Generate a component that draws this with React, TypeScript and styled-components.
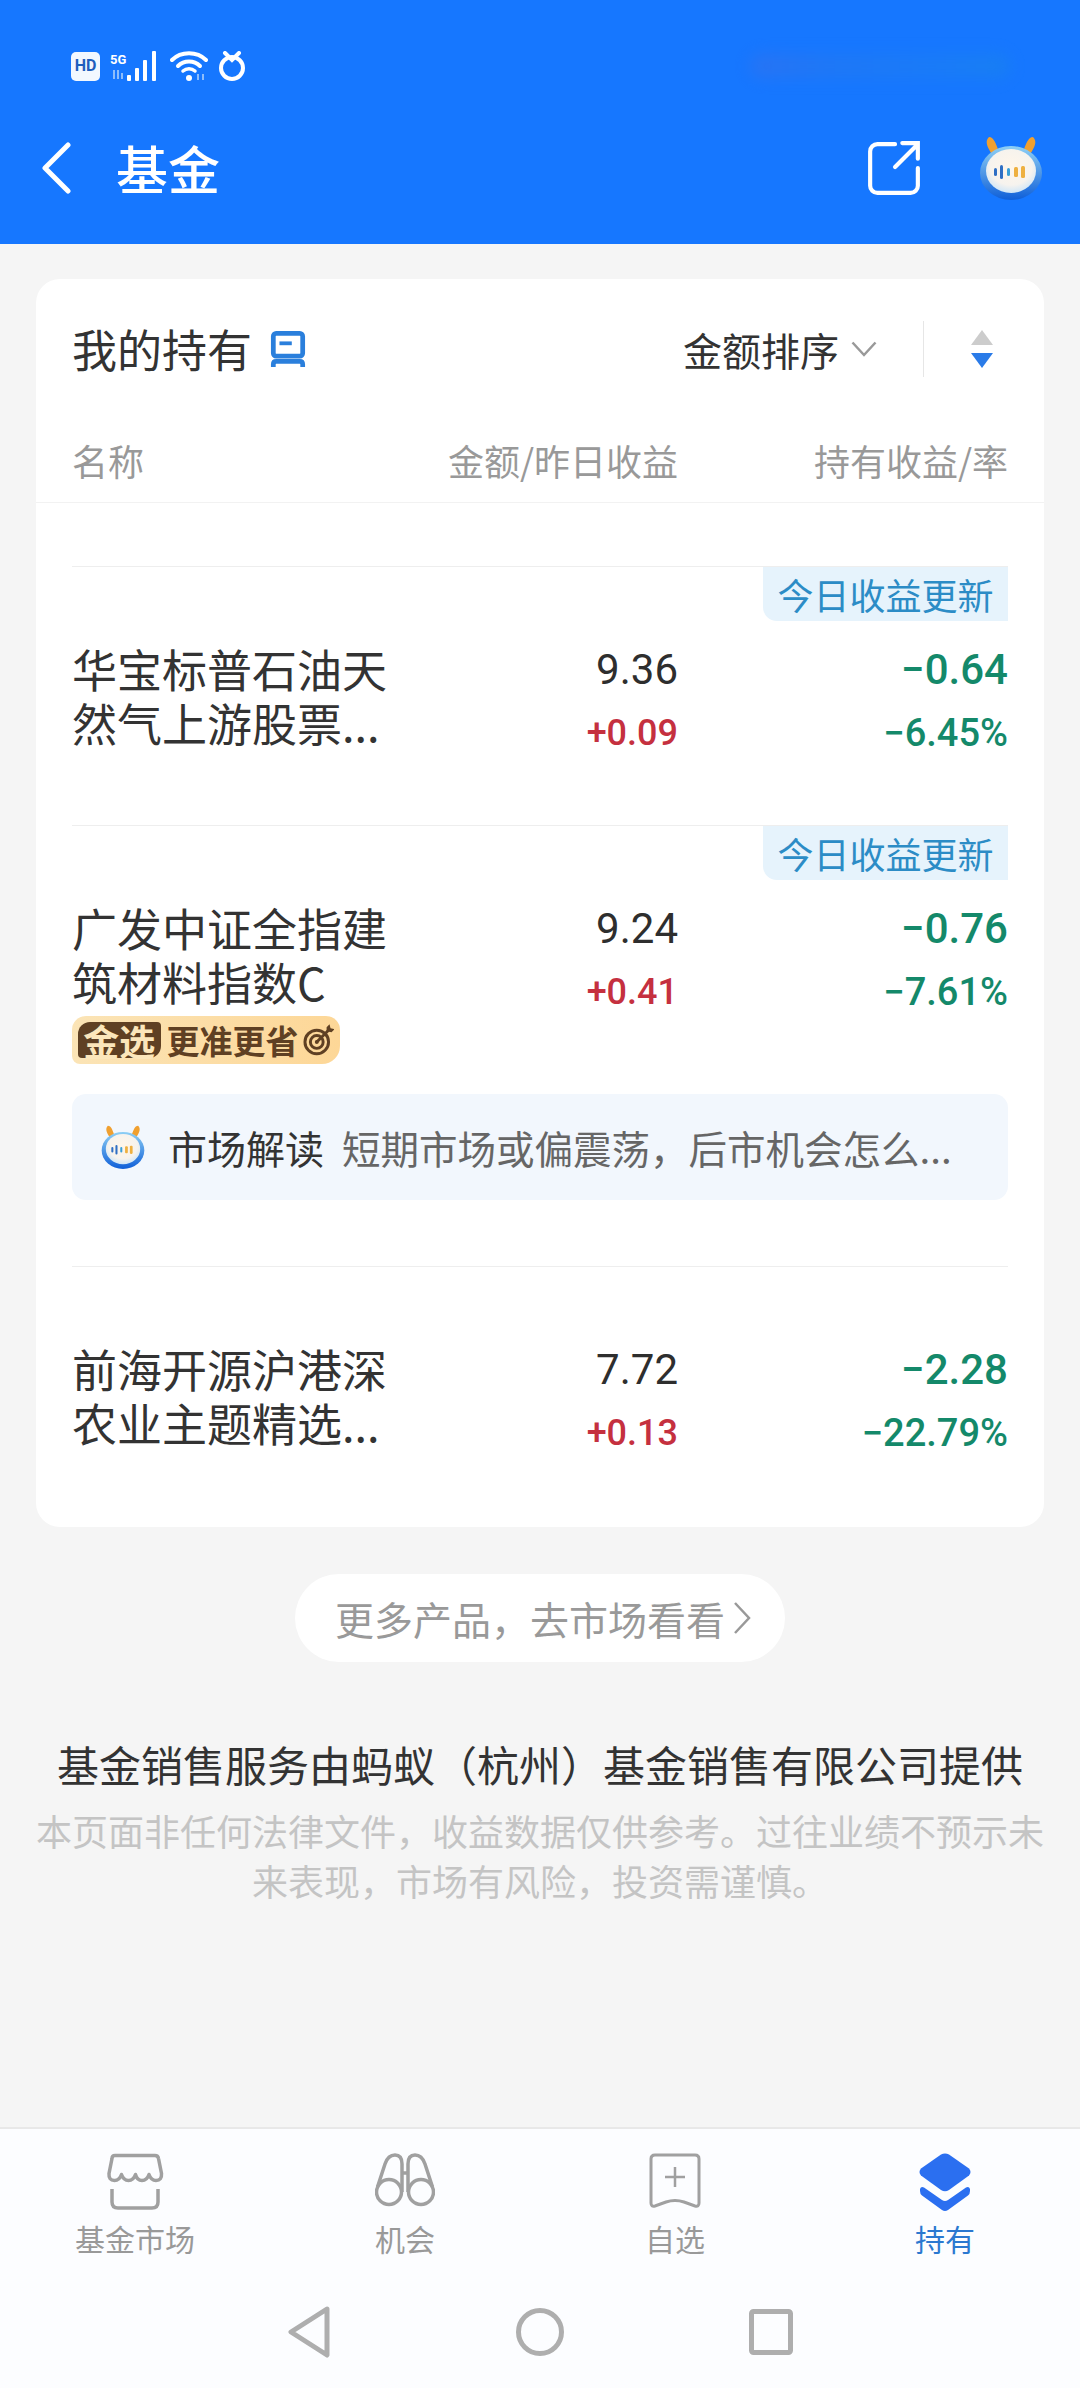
import React from 'react';
import styled, { createGlobalStyle } from 'styled-components';

const GlobalStyle = createGlobalStyle`
  html, body {
    margin: 0;
    padding: 0;
    background: #f5f5f5;
  }
  * {
    box-sizing: border-box;
  }
`;

const Page = styled.div`
  width: 1080px;
  height: 2388px;
  display: flex;
  flex-direction: column;
  overflow: hidden;
  background: #f5f5f5;
  color: #333;
  font-family: "Noto Sans CJK SC", "Noto Sans", sans-serif;
`;

const Header = styled.header`
  height: 244px;
  flex-shrink: 0;
  background: #1677ff;
`;

const StatusBar = styled.div`
  height: 132px;
  padding: 0 70px 0 71px;
  display: flex;
  align-items: center;
  gap: 10px;
`;

const HdBadge = styled.span`
  width: 29px;
  height: 29px;
  display: flex;
  align-items: center;
  justify-content: center;
  border-radius: 5px;
  background: #f2f8ff;
  color: #1f5fbd;
  font: 700 16px/20px "Roboto", sans-serif;
`;

const CarrierSmear = styled.div`
  width: 260px;
  height: 24px;
  margin-left: auto;
  border-radius: 12px;
  background: linear-gradient(90deg, #3f6fe6, #2a78ea 30%, #1f80ee 70%, #1a88e4);
  filter: blur(8px);
  opacity: 0.45;
`;

const TitleBar = styled.div`
  height: 72px;
  padding: 0 37px 0 41px;
  display: flex;
  align-items: center;
`;

const PageTitle = styled.h1`
  margin: 0 auto 0 45px;
  font-size: 52px;
  line-height: 70px;
  font-weight: 500;
  color: #fff;
`;

const ShareButton = styled.span`
  display: flex;
  margin-right: 58px;
`;

const Main = styled.main`
  flex: 1;
  min-height: 0;
`;

const Card = styled.section`
  margin: 35px 36px 0;
  padding-bottom: 2px;
  background: #fff;
  border-radius: 24px;
`;

const CardHead = styled.div`
  height: 142px;
  padding: 0 36px 2px;
  display: flex;
  align-items: center;
`;

const CardTitle = styled.h2`
  margin: 0 18px 0 0;
  font-size: 45px;
  line-height: 60px;
  font-weight: 400;
  color: #333;
`;

const SortLabel = styled.span`
  margin-left: auto;
  font-size: 39px;
  line-height: 50px;
  color: #333;
`;

const SortChevron = styled.span`
  display: flex;
  margin: 0 46px 0 12px;
`;

const SortDivider = styled.span`
  width: 1px;
  height: 56px;
  background: #e6e6e6;
  margin-right: 46px;
`;

const SortArrows = styled.span`
  display: flex;
  margin-right: 14px;
`;

const ColumnHead = styled.div`
  height: 82px;
  padding: 0 36px 4px;
  display: grid;
  grid-template-columns: 1fr 270px 330px;
  align-items: center;
  border-bottom: 1px solid #f2f2f2;
  font-size: 36px;
  color: #999;
`;

const HeadCell = styled.span<{ $right?: boolean }>`
  text-align: ${p => (p.$right ? 'right' : 'left')};
  white-space: nowrap;
`;

const RowList = styled.div`
  padding: 63px 36px 0;
`;

const Row = styled.article`
  border-top: 1px solid #eeeeee;
  padding-bottom: 66px;
`;

const TagSlot = styled.div`
  height: 54px;
  display: flex;
  justify-content: flex-end;
`;

const UpdateTag = styled.span`
  width: 245px;
  height: 54px;
  background: #e6f3fc;
  border-radius: 0 0 0 14px;
  color: #2c8cc6;
  font-size: 36px;
  line-height: 54px;
  text-align: center;
`;

const Cells = styled.div`
  margin-top: 20px;
  min-height: 118px;
  display: grid;
  grid-template-columns: 1fr 270px 330px;
  align-items: start;
`;

const FundName = styled.div`
  width: 320px;
  padding-top: 1px;
  font-size: 45px;
  line-height: 54px;
  color: #333;
`;

const Figures = styled.div`
  padding-top: 1px;
  text-align: right;
  font-family: "Roboto", sans-serif;
`;

const MainFigure = styled.div<{ $tone: 'dark' | 'green' }>`
  font-size: 42px;
  line-height: 56px;
  font-weight: ${p => (p.$tone === 'green' ? 500 : 400)};
  color: ${p => (p.$tone === 'green' ? '#14896a' : '#2e2e2e')};
`;

const SubFigure = styled.div<{ $tone: 'red' | 'green' }>`
  margin-top: 14px;
  font-size: ${p => (p.$tone === 'red' ? 36 : 38)}px;
  line-height: 42px;
  font-weight: 500;
  color: ${p => (p.$tone === 'red' ? '#c5303f' : '#14896a')};
`;

const PromoBadge = styled.div`
  margin-top: 7px;
  width: 268px;
  height: 48px;
  padding: 0 6px;
  display: flex;
  align-items: center;
  border-radius: 14px 14px 18px 8px;
  background: linear-gradient(90deg, #fbe4b6, #fdd797);
`;

const PromoMark = styled.span`
  width: 84px;
  height: 36px;
  border-radius: 12px 4px 12px 4px;
  background: #5f4023;
  color: #fbe6bb;
  font-size: 36px;
  line-height: 36px;
  font-weight: 700;
  text-align: center;
  white-space: nowrap;
`;

const PromoText = styled.span`
  margin: 0 4px 0 6px;
  font-size: 33px;
  line-height: 48px;
  font-weight: 700;
  color: #5f4023;
  white-space: nowrap;
`;

const Insight = styled.div`
  margin-top: 30px;
  height: 106px;
  padding: 0 29px;
  display: flex;
  align-items: center;
  border-radius: 14px;
  background: #f2f7fd;
`;

const InsightLabel = styled.span`
  margin-left: 23px;
  font-size: 39px;
  color: #333;
  white-space: nowrap;
`;

const InsightText = styled.span`
  margin-left: 18px;
  font-size: 38.5px;
  color: #666;
  white-space: nowrap;
`;

const MoreButton = styled.button`
  display: flex;
  align-items: center;
  width: 490px;
  height: 88px;
  margin: 47px auto 0;
  padding: 0 0 0 40px;
  border: 0;
  border-radius: 44px;
  background: #fff;
  color: #999;
  font-family: inherit;
  font-size: 39px;
  white-space: nowrap;
`;

const MoreChevron = styled.span`
  display: flex;
  margin-left: 8px;
`;

const Disclaimer = styled.div`
  margin-top: 72px;
  padding: 0 36px;
  text-align: center;
`;

const ProviderLine = styled.div`
  font-size: 42px;
  line-height: 60px;
  color: #333;
  white-space: nowrap;
`;

const LegalText = styled.p`
  margin: 11px 0 0;
  font-size: 36px;
  line-height: 50px;
  color: #c4c4c4;
`;

const BottomNav = styled.footer`
  height: 261px;
  flex-shrink: 0;
  background: #fcfdff;
  border-top: 2px solid #e8e8e8;
`;

const Tabs = styled.nav`
  padding-top: 24px;
  display: grid;
  grid-template-columns: repeat(4, 1fr);
`;

const Tab = styled.div<{ $active?: boolean }>`
  display: flex;
  flex-direction: column;
  align-items: center;
  font-size: 30px;
  line-height: 40px;
  color: ${p => (p.$active ? '#2b78d0' : '#999')};
`;

const TabIcon = styled.div`
  height: 65px;
  display: flex;
  align-items: flex-start;
`;

const SystemKeys = styled.div`
  margin-top: 17px;
  height: 114px;
  display: flex;
  justify-content: center;
  align-items: center;
  gap: 185px;
`;

const SignalIcon = () => (
  <svg width="50" height="30" viewBox="0 0 50 30">
    <text x="0" y="13" fontFamily="Roboto, sans-serif" fontWeight="700" fontSize="13" fill="#fff">5G</text>
    <path d="M4 19v9M8 19v9M12 22v6" stroke="#8dbdfb" strokeWidth="2" fill="none" />
    <rect x="17" y="24" width="4" height="6" rx="1" fill="#fff" />
    <rect x="25" y="17" width="4" height="13" rx="1" fill="#fff" />
    <rect x="33" y="9" width="4" height="21" rx="1" fill="#fff" />
    <rect x="42" y="0" width="4" height="30" rx="1" fill="#fff" />
  </svg>
);

const WifiIcon = () => (
  <svg width="38" height="30" viewBox="0 0 38 30">
    <path d="M2 9C11 0 27 0 36 9" stroke="#fff" strokeWidth="4" fill="none" strokeLinecap="round" />
    <path d="M8 15c6-6 16-6 22 0" stroke="#fff" strokeWidth="4" fill="none" strokeLinecap="round" />
    <path d="M13 20c3.500-3 8.500-3 12 0" stroke="#fff" strokeWidth="3.500" fill="none" strokeLinecap="round" />
    <circle cx="19" cy="27" r="3" fill="#fff" />
    <path d="M28 23v6M33 23v6" stroke="#8dbdfb" strokeWidth="2" />
  </svg>
);

const AlarmIcon = () => (
  <svg width="28" height="30" viewBox="0 0 28 30">
    <circle cx="14" cy="17" r="11" stroke="#fff" strokeWidth="4" fill="none" />
    <path d="M7 2l7 7 7-7" stroke="#fff" strokeWidth="4" fill="none" strokeLinecap="round" />
  </svg>
);

const BackIcon = () => (
  <svg width="30" height="52" viewBox="0 0 30 52">
    <path d="M27 3L4 26l23 23" stroke="#fff" strokeWidth="5" fill="none" strokeLinecap="round" strokeLinejoin="round" />
  </svg>
);

const ShareIcon = () => (
  <svg width="54" height="56" viewBox="0 0 52 54">
    <path d="M27 4H10a7 7 0 0 0-7 7v33a7 7 0 0 0 7 7h32a7 7 0 0 0 7-7V27" stroke="#fff" strokeWidth="4" fill="none" strokeLinecap="round" />
    <path d="M27 26L48 5M34 3h15v15" stroke="#fff" strokeWidth="4" fill="none" strokeLinecap="round" />
  </svg>
);

// the assistant mascot: orange horns, blue ring, sound bars on the face
const Mascot = ({ size, id }: { size: number; id: string }) => (
  <svg width={size} height={size} viewBox="0 0 64 64">
    <defs>
      <linearGradient id={`${id}-ring`} x1="0" y1="0" x2="0" y2="1">
        <stop offset="0" stopColor="#8fd0f5" />
        <stop offset="1" stopColor="#0f5fd8" />
      </linearGradient>
      <radialGradient id={`${id}-face`} cx="0.5" cy="0.4" r="0.6">
        <stop offset="0" stopColor="#fff6ea" />
        <stop offset="0.7" stopColor="#f6f3ee" />
        <stop offset="1" stopColor="#cfe6f8" />
      </radialGradient>
    </defs>
    <path d="M10 1c5 0 7 7 10 15l-6 4C9 12 5 6 10 1zM54 1c-5 0-7 7-10 15l6 4c5-8 9-14 4-19z" fill="#f0a030" />
    <ellipse cx="32" cy="37" rx="31" ry="27" fill={`url(#${id}-ring)`} />
    <ellipse cx="32" cy="35" rx="25" ry="22" fill={`url(#${id}-face)`} />
    <rect x="15" y="32" width="3" height="8" rx="1.500" fill="#2f6fc4" />
    <rect x="21" y="29" width="3" height="14" rx="1.500" fill="#2f6fc4" />
    <rect x="28" y="32" width="3" height="8" rx="1.500" fill="#3aa0d8" />
    <rect x="35" y="31" width="4" height="10" rx="1.500" fill="#eeb040" />
    <rect x="42" y="30" width="4" height="12" rx="1.500" fill="#eeb040" />
  </svg>
);

const HiddenIcon = () => (
  <svg width="36" height="36" viewBox="0 0 36 38">
    <rect x="2.500" y="2.500" width="31" height="24" rx="3" stroke="#2a7fdc" strokeWidth="5" fill="none" />
    <rect x="9" y="11" width="13" height="4" fill="#2a7fdc" />
    <path d="M2.500 38v-3c0-2 1-3 3-3h25c2 0 3 1 3 3v3" stroke="#2a7fdc" strokeWidth="5" fill="none" />
  </svg>
);

const ChevronDown = () => (
  <svg width="26" height="16" viewBox="0 0 26 16">
    <path d="M1.500 1.500L13 14 24.500 1.500" stroke="#999" strokeWidth="2.500" fill="none" />
  </svg>
);

const SortIcon = () => (
  <svg width="24" height="38" viewBox="0 0 24 38">
    <path d="M12 0l11 15H1z" fill="#cccccc" />
    <path d="M1 23h22L12 38z" fill="#2a7be8" />
  </svg>
);

const TargetIcon = () => (
  <svg width="32" height="32" viewBox="0 0 32 32">
    <circle cx="14" cy="18" r="12" stroke="#5f4023" strokeWidth="3" fill="none" />
    <circle cx="14" cy="18" r="6.500" stroke="#5f4023" strokeWidth="3" fill="none" />
    <circle cx="14" cy="18" r="2" fill="#5f4023" />
    <path d="M14 18L27 5" stroke="#5f4023" strokeWidth="3" />
    <path d="M24 3l3-3 1 4 4 1-3 3-5-1z" fill="#5f4023" />
  </svg>
);

const ChevronRight = () => (
  <svg width="18" height="34" viewBox="0 0 18 34">
    <path d="M2 2l14 15L2 32" stroke="#999" strokeWidth="2.500" fill="none" />
  </svg>
);

const MarketIcon = () => (
  <svg width="58" height="58" viewBox="0 0 58 58" fill="none" stroke="#a0a0a0" strokeWidth="3.500">
    <path d="M9 2.500h40q3 0 3.500 3l3 15q.5 7-5.500 7-5 0-7-6-2 6-7 6t-6.500-6q-2 6-7 6t-7-6q-2 6-7 6-6 0-5.500-7l3-15Q6 2.500 9 2.500z" strokeLinejoin="round" />
    <path d="M6 36v13q0 6 6 6h34q6 0 6-6V36" />
  </svg>
);

const ChanceIcon = () => (
  <svg width="60" height="54" viewBox="0 0 60 54" fill="none" stroke="#a0a0a0" strokeWidth="3.500">
    <circle cx="14" cy="39" r="12.500" />
    <circle cx="46" cy="39" r="12.500" />
    <path d="M2.500 34L10 11q3-9 10-9t7 9v28M57.500 34L50 11q-3-9-10-9t-7 9v28M27 20h6" />
  </svg>
);

const WatchIcon = () => (
  <svg width="52" height="56" viewBox="0 0 52 56" fill="none" stroke="#a0a0a0" strokeWidth="3">
    <path d="M6 2h40q4 0 4 4v44q0 4-4 3l-11-4q-9-3-18 0L6 53q-4 1-4-3V6q0-4 4-4z" />
    <path d="M26 14v20M16 24h20" strokeWidth="2.500" />
  </svg>
);

const HoldingIcon = () => (
  <svg width="52" height="60" viewBox="0 0 52 60" fill="#2b6ff0">
    <path d="M22 1.500q4-2 8 0l20 14q3 3.500 0 7L30 37q-4 2.500-8 0L2 22.500q-3-3.500 0-7z" />
    <path d="M1 36q1-3 4-1.500L23 47q3 2 6 0l18-12.500q3-1.500 4 1.500v2q0 3-2 4.500L29 57q-3 2-6 0L3 42.500Q1 41 1 38z" />
  </svg>
);

const KeyBack = () => (
  <svg width="44" height="54" viewBox="0 0 44 54">
    <path d="M40 4L4 27l36 23z" stroke="#aeaeae" strokeWidth="5" fill="none" strokeLinejoin="round" />
  </svg>
);

const KeyHome = () => (
  <svg width="48" height="52" viewBox="0 0 48 52">
    <circle cx="24" cy="26" r="21.500" stroke="#aeaeae" strokeWidth="5" fill="none" />
  </svg>
);

const KeyRecent = () => (
  <svg width="44" height="46" viewBox="0 0 44 46">
    <rect x="2.500" y="2.500" width="39" height="41" rx="2" stroke="#aeaeae" strokeWidth="5" fill="none" />
  </svg>
);

type Fund = {
  name: string;
  amount: string;
  daily: string;
  total: string;
  rate: string;
  updated?: boolean;
  promo?: boolean;
  insight?: string;
};

const funds: Fund[] = [
  { name: '华宝标普石油天然气上游股票...', amount: '9.36', daily: '+0.09', total: '−0.64', rate: '−6.45%', updated: true },
  {
    name: '广发中证全指建筑材料指数C',
    amount: '9.24',
    daily: '+0.41',
    total: '−0.76',
    rate: '−7.61%',
    updated: true,
    promo: true,
    insight: '短期市场或偏震荡\uFF0C后市机会怎么...',
  },
  { name: '前海开源沪港深农业主题精选...', amount: '7.72', daily: '+0.13', total: '−2.28', rate: '−22.79%' },
];

const tabs = [
  { label: '基金市场', icon: <MarketIcon /> },
  { label: '机会', icon: <ChanceIcon /> },
  { label: '自选', icon: <WatchIcon /> },
  { label: '持有', icon: <HoldingIcon />, active: true },
];

const App: React.FC = () => (
  <Page>
    <GlobalStyle />
    <Header>
      <StatusBar>
        <HdBadge>HD</HdBadge>
        <SignalIcon />
        <WifiIcon />
        <AlarmIcon />
        <CarrierSmear />
      </StatusBar>
      <TitleBar>
        <BackIcon />
        <PageTitle>基金</PageTitle>
        <ShareButton>
          <ShareIcon />
        </ShareButton>
        <Mascot size={64} id="head" />
      </TitleBar>
    </Header>

    <Main>
      <Card>
        <CardHead>
          <CardTitle>我的持有</CardTitle>
          <HiddenIcon />
          <SortLabel>金额排序</SortLabel>
          <SortChevron>
            <ChevronDown />
          </SortChevron>
          <SortDivider />
          <SortArrows>
            <SortIcon />
          </SortArrows>
        </CardHead>
        <ColumnHead>
          <HeadCell>名称</HeadCell>
          <HeadCell $right>金额/昨日收益</HeadCell>
          <HeadCell $right>持有收益/率</HeadCell>
        </ColumnHead>
        <RowList>
          {funds.map(fund => (
            <Row key={fund.name}>
              <TagSlot>{fund.updated && <UpdateTag>今日收益更新</UpdateTag>}</TagSlot>
              <Cells>
                <div>
                  <FundName>{fund.name}</FundName>
                  {fund.promo && (
                    <PromoBadge>
                      <PromoMark>金选</PromoMark>
                      <PromoText>更准更省</PromoText>
                      <TargetIcon />
                    </PromoBadge>
                  )}
                </div>
                <Figures>
                  <MainFigure $tone="dark">{fund.amount}</MainFigure>
                  <SubFigure $tone="red">{fund.daily}</SubFigure>
                </Figures>
                <Figures>
                  <MainFigure $tone="green">{fund.total}</MainFigure>
                  <SubFigure $tone="green">{fund.rate}</SubFigure>
                </Figures>
              </Cells>
              {fund.insight && (
                <Insight>
                  <Mascot size={44} id="insight" />
                  <InsightLabel>市场解读</InsightLabel>
                  <InsightText>{fund.insight}</InsightText>
                </Insight>
              )}
            </Row>
          ))}
        </RowList>
      </Card>

      <MoreButton>
        {'更多产品\uFF0C去市场看看'}
        <MoreChevron>
          <ChevronRight />
        </MoreChevron>
      </MoreButton>

      <Disclaimer>
        <ProviderLine>{'基金销售服务由蚂蚁\uFF08杭州\uFF09基金销售有限公司提供'}</ProviderLine>
        <LegalText>{'本页面非任何法律文件\uFF0C收益数据仅供参考。过往业绩不预示未来表现\uFF0C市场有风险\uFF0C投资需谨慎。'}</LegalText>
      </Disclaimer>
    </Main>

    <BottomNav>
      <Tabs>
        {tabs.map(tab => (
          <Tab key={tab.label} $active={tab.active}>
            <TabIcon>{tab.icon}</TabIcon>
            {tab.label}
          </Tab>
        ))}
      </Tabs>
      <SystemKeys>
        <KeyBack />
        <KeyHome />
        <KeyRecent />
      </SystemKeys>
    </BottomNav>
  </Page>
);

export default App;
